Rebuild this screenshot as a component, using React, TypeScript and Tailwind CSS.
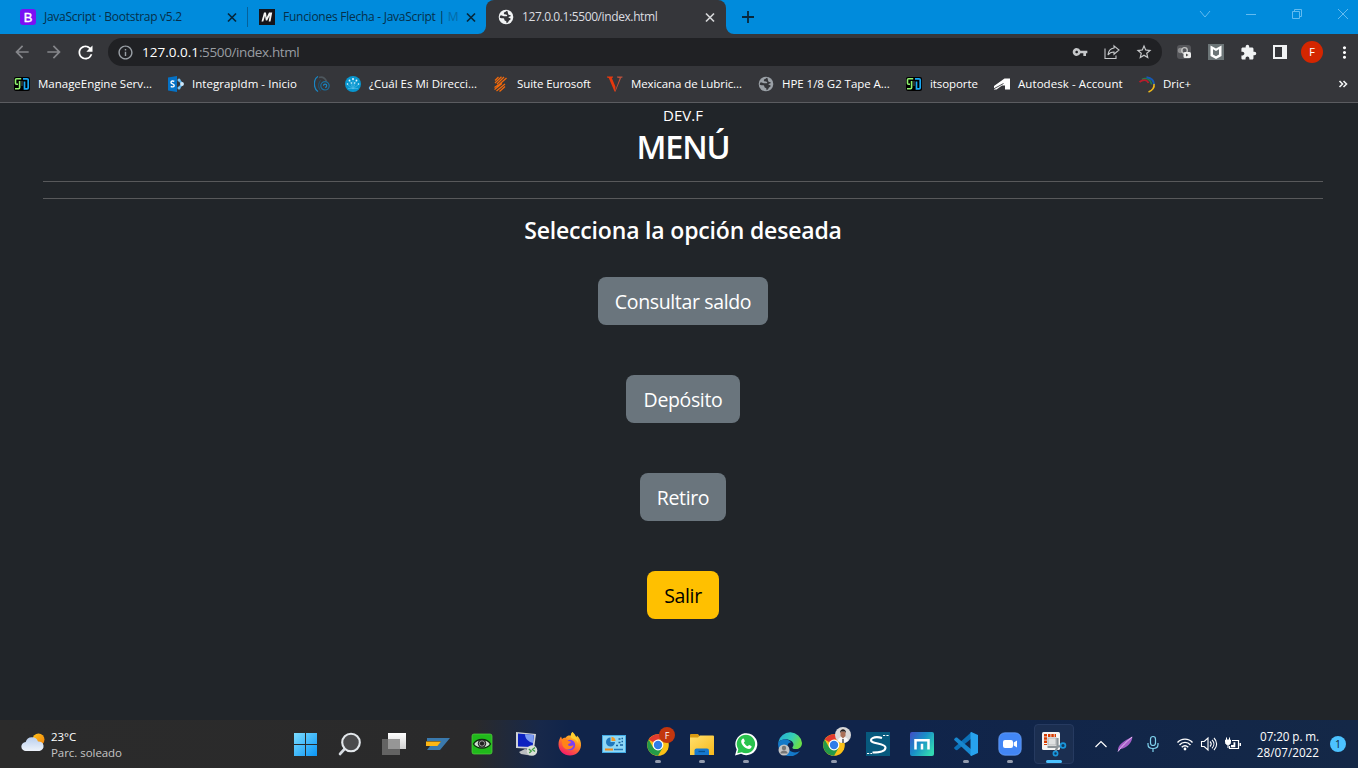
import type { ReactNode } from 'react';
import {
  MdArrowBack,
  MdArrowForward,
  MdRefresh,
  MdInfoOutline,
  MdVpnKey,
  MdStarBorder,
  MdExtension,
  MdMoreVert,
} from 'react-icons/md';

/* ---------- Browser icons ---------- */

function CloseX({ className }: { className: string }) {
  return (
    <svg width="16" height="16" viewBox="0 0 16 16" className={className}>
      <path d="M4 4.500l8 8M12 4.500l-8 8" stroke="currentColor" strokeWidth="1.700" />
    </svg>
  );
}

function BootstrapIcon() {
  return (
    <div className="flex h-4 w-4 shrink-0 items-center justify-center rounded-[3px] bg-[#7a10f4] font-['Liberation_Sans'] text-[13px] leading-none text-white [-webkit-text-stroke:0.4px_white]">
      B
    </div>
  );
}

function MIcon() {
  return (
    <svg width="16" height="16" viewBox="0 0 16 16" className="shrink-0">
      <rect width="16" height="16" fill="#15141a" />
      <path d="M2.500 12.500L5 3.500h2l.6 5L10 3.500h3.200l-1.700 9H9.700l1-6-2.500 5H6.800L6 6.800l-1.700 5.700z" fill="#f4f4f4" />
    </svg>
  );
}

function ManageIcon() {
  return (
    <svg width="16" height="16" viewBox="0 0 16 16" className="shrink-0">
      <rect x="0" y="1" width="16" height="14" rx="2" fill="#000" />
      <path d="M7.200 2.800H2.500q-1 0-1 1v3.400q0 1 1 1H4M5.600 5v6.700q0 1-1 1H1" fill="none" stroke="#8ff26d" strokeWidth="1.600" />
      <path d="M9 2.800h4q1.200 0 1.200 1v8q0 1-1.200 1h-2.500V5.500" fill="none" stroke="#18a8f5" strokeWidth="1.700" />
      <path d="M8 5v5" stroke="#6d7a80" strokeWidth=".8" />
    </svg>
  );
}

function SharePointIcon() {
  return (
    <svg width="16" height="16" viewBox="0 0 16 16" className="shrink-0">
      <path d="M0 1.600L9 0v16l-9-1.600z" fill="#0572c6" />
      <path d="M6.300 5.400C5 4.600 3 4.800 3 6.400c0 1.800 3.200 1.200 3.200 3 0 1.700-2.300 1.800-3.400 1" fill="none" stroke="#fff" strokeWidth="1.400" />
      <path d="M10.500 3.500l4 4.500-4 4.500" fill="none" stroke="#5bb4ee" strokeWidth="2" />
      <circle cx="14" cy="8" r="1.900" fill="#cfe9fb" />
      <circle cx="11" cy="4" r="1.500" fill="#7cc4f2" />
      <circle cx="11" cy="12" r="1.500" fill="#7cc4f2" />
    </svg>
  );
}

function SwirlIcon() {
  return (
    <svg width="16" height="16" viewBox="0 0 16 16" className="shrink-0">
      <path d="M4 .5C-.8 3-.8 12.500 4 15.500" fill="none" stroke="#1a86c4" strokeWidth="1.300" />
      <path d="M6.500 4.500c-2.500 3-2.500 7 0 10" fill="none" stroke="#175a80" strokeWidth="1" />
      <path d="M5 1.500c3.500-1 6 .5 7.500 4" fill="none" stroke="#4d565c" strokeWidth="1.800" />
      <circle cx="11" cy="9.800" r="4.200" fill="none" stroke="#1a6f9f" strokeWidth="1.200" />
      <path d="M9.500 9.800a1.600 1.600 0 1 1 1.600 1.600" fill="none" stroke="#1a86c4" strokeWidth="1.200" />
    </svg>
  );
}

function NetworkIcon() {
  return (
    <svg width="16" height="16" viewBox="0 0 16 16" className="shrink-0">
      <circle cx="8" cy="8" r="8" fill="#0896cf" />
      <g fill="none" stroke="#57bfe8" strokeWidth=".6">
        <path d="M8 13V3M8 13L4.500 4M8 13l3.500-9M8 13L2 8M8 13l6-5M3 12.500h10" />
      </g>
      <g fill="#e8f8ff">
        <circle cx="8" cy="3" r="1" />
        <circle cx="4.500" cy="4.500" r=".9" />
        <circle cx="11.500" cy="4.500" r=".9" />
        <circle cx="2.500" cy="8" r=".8" />
        <circle cx="13.500" cy="8" r=".8" />
        <circle cx="6.500" cy="7" r=".7" />
        <circle cx="9.500" cy="7" r=".7" />
      </g>
    </svg>
  );
}

function EurosoftIcon() {
  return (
    <svg width="16" height="16" viewBox="0 0 16 16" className="shrink-0">
      <g fill="none" stroke="#f0690c" strokeWidth="1.300">
        <path d="M2 4.500L5.500 1M2 7L8.500 .8M4 8L11 1M4.500 10L13.500 2M1.500 11.500L5 9M1.500 13.500L9 7.500M3.500 15L12 8M6.500 15.500l5.500-5" />
      </g>
    </svg>
  );
}

function VIcon() {
  return (
    <svg width="16" height="16" viewBox="0 0 16 16" className="shrink-0">
      <path d="M0 .5h6v1L4.800 2l3.600 8.500V15.500H7.500L1.800 2 0 1.500z" fill="#e8380d" />
      <path d="M10 .5h5.500v1l-1.400.5-5.600 13.500H7.800l4.900-13.200L10 1.500z" fill="#b9503c" />
    </svg>
  );
}

function AutodeskIcon() {
  return (
    <svg width="16" height="16" viewBox="0 0 16 16" className="shrink-0">
      <path d="M0 10L10.500 2.500H16V13.500h-5V9.500H8L2.500 13.500H0z" fill="#fff" />
      <path d="M0 12.700L9.500 7.500" stroke="#35363a" strokeWidth=".9" />
    </svg>
  );
}

function DricIcon() {
  return (
    <svg width="17" height="17" viewBox="0 0 17 17" className="shrink-0">
      <path d="M3 3.500c4-2.500 9 0 9.500 5" fill="none" stroke="#277a4a" strokeWidth="1.500" />
      <path d="M7.500 1.300c5 .7 7.500 3.500 7.500 7.500" fill="none" stroke="#1659b5" strokeWidth="2" />
      <path d="M.5 6C4.500 2.800 8.500 4 9.500 7" fill="none" stroke="#b71c2b" strokeWidth="1.900" />
      <path d="M15 8c.6 3.500-2 6.500-5.500 8" fill="none" stroke="#f0bb1a" strokeWidth="1.600" />
    </svg>
  );
}

function Globe({ disc, land }: { disc: string; land: string }) {
  return (
    <svg width="16" height="16" viewBox="0 0 16 16" className="shrink-0">
      <circle cx="8" cy="8" r="7.300" className={disc} />
      <path
        d="M9.300 1.800c-1.300.2-1.600 1.200-2.800 1.500-1 .3-.7 1.500-.2 1.900.9.600 2.200-.2 2.800.9.400.9-.7 1.200-1.700 1.200H5.800L3 6.200c-.8.300-1.300 1.500-1.200 2.500.9.700 2.600.3 3.700.6 1.200.4.600 1.700 1.200 2.300.7.600 1.500.2 1.700 1.200l.1 1.400c1.700-.5 2-1.800 2.500-2.700.8-.8 1.900-.7 1.600-2-.5-.7-1.500-.4-2.200-1 .1-1 1.100-1.100 1.800-1.100.9-.2.600-1.300-.3-1.400-1-.1-1.500-.3-1.700-1.100-.2-1.100-.6-1.900-.9-3.100z"
        className={land}
      />
    </svg>
  );
}

function Bookmark({
  icon,
  label,
  className,
  textClass = '',
}: {
  icon: ReactNode;
  label?: string;
  className: string;
  textClass?: string;
}) {
  return (
    <div className={`flex shrink-0 items-center ${className}`}>
      <div className="flex w-6 shrink-0 items-center">{icon}</div>
      {label && <span className={`whitespace-pre text-white ${textClass}`}>{label}</span>}
    </div>
  );
}

function TabStrip() {
  return (
    <div className="flex h-[34px] items-center bg-[#008bdc] pl-5 text-[12px] text-[#062f4a]">
      <BootstrapIcon />
      <span className="ml-2 w-[180px] whitespace-pre tracking-[-0.27px]">JavaScript · Bootstrap v5.2</span>
      <CloseX className="text-[#06273b]" />
      <div className="ml-[7px] h-5 w-px bg-[#06619a]" />
      <div className="ml-[11px] flex">
        <MIcon />
      </div>
      <span className="ml-2 w-[176px] tracking-[-0.26px] whitespace-pre">
        Funciones Flecha - JavaScript | <span className="text-[#046aa6]">M</span>
      </span>
      <CloseX className="ml-[4px] text-[#06273b]" />
      <div className="ml-[-1px] flex h-full items-end">
        <svg width="8" height="8" viewBox="0 0 8 8">
          <path d="M8 0v8H0a8 8 0 0 0 8-8z" fill="#35363a" />
        </svg>
      </div>
      <div className="flex h-full w-[240px] items-center rounded-t-lg bg-[#35363a] pl-3 text-[#dcdde0]">
        <Globe disc="fill-[#f1f3f4]" land="fill-[#35363a]" />
        <span className="ml-2 w-[180px] tracking-[-0.4px]">127.0.0.1:5500/index.html</span>
        <CloseX className="text-[#d5d6d8]" />
      </div>
      <div className="flex h-full items-end">
        <svg width="8" height="8" viewBox="0 0 8 8">
          <path d="M0 0v8h8a8 8 0 0 1-8-8z" fill="#35363a" />
        </svg>
      </div>
      <svg width="14" height="14" viewBox="0 0 14 14" className="ml-[7px]">
        <path d="M7 1v12M1 7h12" stroke="#08273b" strokeWidth="1.800" />
      </svg>
      <div className="mr-[9px] ml-auto flex h-7 items-center gap-[34px] pb-[6px] text-[#63bbf0]">
        <svg width="12" height="12" viewBox="0 0 12 12" fill="none" stroke="currentColor">
          <path d="M1 3l5 6 5-6" />
        </svg>
        <svg width="12" height="12" viewBox="0 0 12 12" fill="none" stroke="currentColor">
          <path d="M1 6.500h10" />
        </svg>
        <svg width="12" height="12" viewBox="0 0 12 12" fill="none" stroke="currentColor">
          <path d="M1.500 3.500h7v7h-7zM3.500 3.500v-2h7v7h-2" />
        </svg>
        <svg width="12" height="12" viewBox="0 0 12 12" fill="none" stroke="currentColor">
          <path d="M1 1l10 10M11 1L1 11" />
        </svg>
      </div>
    </div>
  );
}

function Toolbar() {
  return (
    <div className="flex h-9 items-center bg-[#35363a] pl-3">
      <MdArrowBack size={20} className="text-[#85868a]" />
      <MdArrowForward size={20} className="ml-3 text-[#85868a]" />
      <MdRefresh size={21} className="ml-[11px] text-white" />
      <div className="ml-3 flex h-7 w-[1054px] items-center rounded-full bg-[#202124] pl-[9px]">
        <MdInfoOutline size={17} className="text-[#9aa0a6]" />
        <span className="ml-2 text-[13.500px] text-[#999da2]">
          <span className="text-white">127.0.0.1</span>
          <span className="tracking-[-0.38px]">:5500/index.html</span>
        </span>
        <div className="mr-[10px] ml-auto flex items-center gap-4 text-[#c6c8ca]">
          <MdVpnKey size={16} />
          <svg width="16" height="16" viewBox="0 0 16 16" fill="none" stroke="currentColor" strokeWidth="1.100">
            <path d="M1 4.500v10h11v-3" />
            <path d="M10 1.800l5 4.200-5 4.200V8c-3 0-4.700 1-6 3 .3-4 2.500-6.500 6-7z" />
          </svg>
          <MdStarBorder size={18} className="-mx-px" />
        </div>
      </div>
      <svg width="16" height="16" viewBox="0 0 16 16" className="ml-[14px]">
        <rect x="1" y="1" width="14" height="14" rx="3" fill="#55565a" />
        <circle cx="4.500" cy="6.500" r="2.700" fill="#8d8d8f" />
        <circle cx="8.500" cy="6.500" r="2.800" fill="none" stroke="#c4c4c4" strokeWidth="1.300" />
        <rect x="7.500" y="8" width="7.500" height="6" rx="1.500" fill="#eeeeee" />
        <path d="M10 9.500v3l2.500-1.500z" fill="#4a4a4a" />
      </svg>
      <svg width="16" height="16" viewBox="0 0 16 16" className="ml-4">
        <rect width="16" height="16" fill="#6c7577" />
        <path d="M2.500 1.500L8 4.500l5.500-3V12L8 15 2.500 12zM5 5.300v5.300L8 12.300l3-1.700V5.300L8 7z" fill="#fff" fillRule="evenodd" />
      </svg>
      <MdExtension size={17} className="ml-4 text-[#f1f3f4]" />
      <svg width="14" height="14" viewBox="0 0 14 14" className="ml-4">
        <path d="M1 1h12v12H1z" fill="none" stroke="#f1f3f4" strokeWidth="2" />
        <path d="M9 0h5v14H9z" fill="#f1f3f4" />
      </svg>
      <div className="ml-[14px] flex h-[22px] w-[22px] items-center justify-center rounded-full bg-[#d42600] text-[11.500px] text-white">
        F
      </div>
      <MdMoreVert size={19} className="ml-3 text-white" />
    </div>
  );
}

function Bookmarks() {
  return (
    <div className="flex h-[33px] items-center overflow-hidden border-b border-[#5b5c60] bg-[#35363a] pb-[4px] pl-[14px] text-[11.500px]">
      <Bookmark className="w-[154px]" icon={<ManageIcon />} label="ManageEngine Serv..." textClass="tracking-[-0.01px]" />
      <Bookmark className="w-[146px]" icon={<SharePointIcon />} label="Integrapldm - Inicio" textClass="tracking-[0.05px]" />
      <Bookmark className="w-[31px]" icon={<SwirlIcon />} />
      <Bookmark className="w-[148px]" icon={<NetworkIcon />} label="¿Cuál Es Mi Direcci..." />
      <Bookmark className="w-[114px]" icon={<EurosoftIcon />} label="Suite Eurosoft" textClass="tracking-[-0.1px]" />
      <Bookmark className="w-[151px]" icon={<VIcon />} label="Mexicana de Lubric..." textClass="tracking-[-0.09px]" />
      <Bookmark
        className="w-[148px]"
        icon={<Globe disc="fill-[#9aa0a6]" land="fill-[#35363a]" />}
        label="HPE 1/8 G2 Tape A..."
        textClass="tracking-[-0.04px]"
      />
      <Bookmark className="w-[88px]" icon={<ManageIcon />} label="itsoporte" textClass="tracking-[-0.09px]" />
      <Bookmark className="w-[145px]" icon={<AutodeskIcon />} label="Autodesk - Account" textClass="tracking-[0.07px]" />
      <Bookmark className="w-[100px]" icon={<DricIcon />} label="Dric+" />
      <svg width="10" height="10" viewBox="0 0 10 10" className="mr-[10px] ml-auto shrink-0">
        <path d="M1.500 2l3 3-3 3M5.500 2l3 3-3 3" fill="none" stroke="#f1f3f4" strokeWidth="1.600" />
      </svg>
    </div>
  );
}

/* ---------- Page ---------- */

function Page() {
  return (
    <main className="flex h-[617px] flex-col items-center bg-[#212529] pr-[35px] pl-[43px] text-white">
      <div className="text-[15px] leading-6 tracking-[0.02px]">DEV.F</div>
      <h1 className="mb-[15px] pt-px text-[32.500px] leading-[38px] font-semibold tracking-[-1.2px]">MENÚ</h1>
      <hr className="mb-4 w-full border-[#58595b]" />
      <hr className="mb-4 w-full border-[#58595b]" />
      <h2 className="mb-8 pt-px text-[23px] leading-[29px] font-semibold tracking-[-0.17px]">
        Selecciona la opción deseada
      </h2>
      <div className="flex flex-col items-center gap-[50px] text-[19.500px] tracking-[-0.36px]">
        <button className="h-12 w-[170px] rounded-lg bg-[#6a757d] pt-[2px]">Consultar saldo</button>
        <button className="h-12 w-[114px] rounded-lg bg-[#6a757d] pt-[2px]">Depósito</button>
        <button className="h-12 w-[86px] rounded-lg bg-[#6a757d] pt-[2px]">Retiro</button>
        <button className="h-12 w-[72px] rounded-lg bg-[#ffc000] pt-[2px] text-black">Salir</button>
      </div>
    </main>
  );
}

/* ---------- Taskbar ---------- */

function WeatherIcon() {
  return (
    <svg width="24" height="20" viewBox="0 0 24 20">
      <defs>
        <linearGradient id="cloud" x1="0" y1="0" x2="0" y2="1">
          <stop offset="0" stopColor="#b9cfee" />
          <stop offset="1" stopColor="#eef3fa" />
        </linearGradient>
        <linearGradient id="sun" x1="0" y1="0" x2="1" y2="1">
          <stop offset="0" stopColor="#ffc31a" />
          <stop offset="1" stopColor="#f07f09" />
        </linearGradient>
      </defs>
      <circle cx="17.500" cy="6.500" r="6" fill="url(#sun)" />
      <path d="M5 18a4.500 4.500 0 0 1-.3-9A6.500 6.500 0 0 1 17 8.500 4.800 4.800 0 0 1 18.500 18z" fill="url(#cloud)" />
    </svg>
  );
}

function WindowsIcon() {
  return (
    <svg width="24" height="24" viewBox="0 0 24 24">
      <defs>
        <linearGradient id="win" x1="0" y1="0" x2="1" y2="1">
          <stop offset="0" stopColor="#7bdcff" />
          <stop offset="1" stopColor="#0a95f5" />
        </linearGradient>
      </defs>
      <path d="M0 1h11v11H0zM12 1h11v11H12zM0 13h11v11H0zM12 13h11v11H12z" fill="url(#win)" />
    </svg>
  );
}

function SearchIcon() {
  return (
    <svg width="24" height="24" viewBox="0 0 24 24">
      <path d="M2 22L7.500 16" stroke="#d5dae0" strokeWidth="2.600" strokeLinecap="round" />
      <circle cx="13" cy="10.500" r="8.800" fill="#4a4a4c" stroke="#e3e7eb" strokeWidth="2.100" />
    </svg>
  );
}

function TaskViewIcon() {
  return (
    <svg width="24" height="24" viewBox="0 0 24 24">
      <defs>
        <linearGradient id="tv" x1="0" y1="0" x2="0" y2="1">
          <stop offset="0" stopColor="#fff" />
          <stop offset="1" stopColor="#d0d0d0" />
        </linearGradient>
      </defs>
      <path d="M6 1h18v16H6z" fill="url(#tv)" />
      <path d="M0 7h18v16H0z" fill="#6b6b6b" opacity=".88" />
      <path d="M6 7h12v10H6z" fill="#a0a0a0" opacity=".75" />
    </svg>
  );
}

function WingIcon() {
  return (
    <svg width="24" height="24" viewBox="0 0 24 24">
      <path d="M1 6h23L14 18H1l3-4h7l4-5H1z" fill="#3a79ad" />
      <path d="M0 9.500h15l-3.500 4.500H0z" fill="#fdb714" />
    </svg>
  );
}

function EyeIcon() {
  return (
    <svg width="24" height="24" viewBox="0 0 24 24">
      <rect x="2" y="2" width="20" height="20" rx="2" fill="#20b91b" stroke="#58d343" strokeWidth=".7" />
      <path d="M3.500 12C7 6 17 6 20.500 12 17 17.500 7 17.500 3.500 12z" fill="#cfdccf" stroke="#0b2b0b" strokeWidth="1.300" />
      <circle cx="12" cy="11.500" r="4.200" fill="#222" />
      <circle cx="12" cy="11.500" r="2.700" fill="none" stroke="#bbb" strokeWidth=".8" />
    </svg>
  );
}

function RemoteIcon() {
  return (
    <svg width="24" height="24" viewBox="0 0 24 24">
      <path d="M2 0l20 2-2 15-18-1z" fill="#d0d3d6" />
      <path d="M4 1.500l16 1.500-1.500 12L4 14.500z" fill="#0c22c0" />
      <path d="M11 2.200l8.800 .8L19 11c-4-1-8-4-8-8.800z" fill="#7b9cf2" />
      <path d="M5 20l6-3 8 2-3 4.500-9-1.500z" fill="#babdc0" />
      <circle cx="18" cy="18.500" r="5.300" fill="#dadfd8" />
      <path d="M14.800 17l2.500 2-2 2M21 15.500l-2.500 2 2.500 2" fill="none" stroke="#3d9d43" strokeWidth="1.300" />
    </svg>
  );
}

function FirefoxIcon() {
  return (
    <svg width="24" height="24" viewBox="0 0 24 24">
      <defs>
        <linearGradient id="ff" x1=".8" y1="0" x2=".3" y2="1">
          <stop offset="0" stopColor="#ffe335" />
          <stop offset=".45" stopColor="#ff8a20" />
          <stop offset="1" stopColor="#f5156c" />
        </linearGradient>
      </defs>
      <path d="M14.500 0c2 1.500 3 3.300 3.500 5 .7-.2 1-.8 1-1.500 3 3 4.300 6.500 4 10C22.500 19.500 18 23.500 12 23.500S.5 19 .5 12.500C.5 9 1.700 6.500 3 4.500l1 2.500c1.200-1.200 2.500-1.500 3.500-1.300 1.400-2 3.500-2.400 5.500-2C13 2.500 13.500 1 14.500 0z" fill="url(#ff)" />
      <circle cx="12" cy="13" r="5.200" fill="#7b3ff2" />
      <path d="M3.500 7.500C7 6.500 9 7.500 10.500 9c1 .2 2.500.3 2.500 1.200-1 1.300-2 1-3 2.300.5 2 3.500 2 5.500.5-.5 5-8.500 6.500-11 .5z" fill="#ff8418" />
      <path d="M14.500 0c1 4 6 5 5.800 11.500-1-3-3.500-4.500-6-5C12 4.500 12.500 2 14.500 0z" fill="#ffcf30" />
    </svg>
  );
}

function ControlPanelIcon() {
  return (
    <svg width="24" height="24" viewBox="0 0 24 24">
      <rect x=".5" y="3.500" width="23" height="17" fill="#8ed7f6" stroke="#43abe4" />
      <path d="M8.500 5.500V10h4.500A4.500 4.500 0 1 1 8.500 5.500z" fill="#2078bd" />
      <path d="M9.500 4.800a4.500 4.500 0 0 1 4 4.200h-4z" fill="#ef9b27" />
      <path d="M3 17.500h8" stroke="#f08a1a" strokeWidth="2" />
      <path d="M12 17.500h9" stroke="#267ab9" strokeWidth="1.500" />
      <path d="M14 13.500h2M16.500 10.500h2M16.500 7h2M19.500 6.500h1.500M19.500 9.500h1.500M18 13h3" fill="none" stroke="#1762a0" strokeWidth="1.600" />
    </svg>
  );
}

function ChromeIcon() {
  return (
    <svg width="24" height="24" viewBox="0 0 24 24">
      <circle cx="12" cy="13" r="10.800" fill="#fbc116" />
      <path d="M12 13L2.650 7.600A10.800 10.800 0 0 1 21.350 7.600H12z" fill="#e33b2e" />
      <path d="M2.650 7.600A10.800 10.800 0 0 0 12 23.800l4.700-8.100L12 13 7.300 15.700z" fill="#249a48" />
      <circle cx="12" cy="13" r="5.400" fill="#fff" />
      <circle cx="12" cy="13" r="4.200" fill="#2f7de9" />
    </svg>
  );
}

function FolderIcon() {
  return (
    <svg width="24" height="24" viewBox="0 0 24 24">
      <defs>
        <linearGradient id="fold" x1="0" y1="0" x2="1" y2="1">
          <stop offset="0" stopColor="#ffe06e" />
          <stop offset="1" stopColor="#f9b91b" />
        </linearGradient>
      </defs>
      <path d="M0 3q0-1 1-1h7l2 2.500V8H0z" fill="#d99a12" />
      <path d="M0 5.500h8l2-2h13q1 0 1 1V23H0z" fill="url(#fold)" />
      <path d="M4.500 23v-4.500q0-2 2-2h10.500q2 0 2 2V23z" fill="#1678ce" />
      <path d="M8.500 19.500h6.500" stroke="#07508e" strokeWidth="1.300" />
    </svg>
  );
}

function WhatsAppIcon() {
  return (
    <svg width="24" height="24" viewBox="0 0 24 24">
      <path d="M1 23.500l1.700-6A11 11 0 1 1 7 21.800z" fill="#fff" />
      <path d="M3.300 21.200l1-4a9.200 9.200 0 1 1 3.400 3z" fill="#29c24d" />
      <path d="M8.600 6.800c.7-.5 1.300-.2 1.600.7l.6 1.600c.1.600-.9 1.200-.9 1.600.8 1.600 2 2.800 3.700 3.500.5 0 1-1 1.500-1.200l2.300 1.100c.6.4 0 2.600-2.300 2.900-3.600 0-8-4.300-7.900-7.500 0-1.200.6-2.100 1.400-2.700z" fill="#fff" />
    </svg>
  );
}

function EdgeIcon() {
  return (
    <svg width="24" height="24" viewBox="0 0 24 24">
      <defs>
        <linearGradient id="edge" x1="0" y1="0" x2="1" y2=".4">
          <stop offset="0" stopColor="#23a9dc" />
          <stop offset=".6" stopColor="#35cfb6" />
          <stop offset="1" stopColor="#69df4b" />
        </linearGradient>
      </defs>
      <path d="M.3 10A12 12 0 0 1 24 11c0 4-3 6.500-7 6-2 0-3.500-1-2-2.500C18 9 7 4 .3 10z" fill="url(#edge)" />
      <path d="M.3 10C5 5.500 11.500 7 13 10.500 9 10.500 8.500 15 11 18c3 3 8 3 11 1A12 12 0 0 1 .3 10z" fill="#1479c9" />
      <circle cx="6" cy="18" r="5.500" fill="#c4c4c4" />
      <circle cx="6" cy="16" r="2.200" fill="#777" />
      <path d="M2.300 21.500c.3-4 7.100-4 7.400 0" fill="#777" />
    </svg>
  );
}

function RoadIcon() {
  return (
    <svg width="24" height="24" viewBox="0 0 24 24">
      <rect width="24" height="24" fill="#07597d" />
      <path d="M16 6C8 3.500 2 7.500 6.500 10c3.500 1.800 13 2 13 5.500 0 4-6 5-13 5" fill="none" stroke="#fff" strokeWidth="2.100" />
      <path d="M17 3.500h6M1 21.500h5" stroke="#fff" strokeWidth="1.200" strokeDasharray="2.200 1.200" />
    </svg>
  );
}

function MaxthonIcon() {
  return (
    <svg width="24" height="24" viewBox="0 0 24 24">
      <defs>
        <linearGradient id="mx" x1="0" y1="0" x2="1" y2=".7">
          <stop offset="0" stopColor="#424cc5" />
          <stop offset=".5" stopColor="#198fc7" />
          <stop offset="1" stopColor="#32d9b3" />
        </linearGradient>
      </defs>
      <rect width="24" height="24" rx="2" fill="url(#mx)" />
      <path d="M5.500 17.500V8.300h13v9.200M12 17.500v-5.800" fill="none" stroke="#fff" strokeWidth="2.500" />
    </svg>
  );
}

function CodeIcon() {
  return (
    <svg width="24" height="24" viewBox="0 0 24 24">
      <path d="M17.500 0v6.500L3 18.300l-1.200-.2L.2 16.500v-1z" fill="#0b70b8" />
      <path d="M.2 8v-1l1.600-1.400L3 5.500l14.500 12V24z" fill="#1887cf" />
      <path d="M17.300 0L24 3v18l-6.700 3q-1 0-.8-1.300V1.300Q16.300 0 17.300 0z" fill="#27a2ee" />
    </svg>
  );
}

function ZoomIcon() {
  return (
    <svg width="24" height="24" viewBox="0 0 24 24">
      <rect x=".8" y=".8" width="22.400" height="22.400" rx="6" fill="#4286f5" stroke="#6ea5fa" strokeWidth=".7" />
      <rect x="5" y="8" width="10" height="8" rx="2" fill="#fff" />
      <path d="M15.700 10.500L19 8.500v7l-3.300-2z" fill="#fff" />
    </svg>
  );
}

function SnipIcon() {
  return (
    <svg width="26" height="26" viewBox="0 0 26 26">
      <rect x="1" y="1" width="18" height="18" rx="1.500" fill="#f4f4f4" />
      <path d="M4.500 3v11M7 4.500h8" fill="none" stroke="#d83b01" strokeWidth="3" strokeDasharray="2.500 .8" />
      <path d="M7 14V7h8v7z" fill="#dfe1e2" stroke="#b5b8ba" strokeWidth="1.200" />
      <path d="M16.500 7v9l-2 4M6.500 16h9l5-1" fill="none" stroke="#8d9499" strokeWidth="2.200" />
      <circle cx="22" cy="14.500" r="2.400" fill="#12375c" stroke="#1996db" strokeWidth="1.700" />
      <circle cx="14.500" cy="22.500" r="2.100" fill="#12375c" stroke="#1996db" strokeWidth="1.700" />
    </svg>
  );
}

function AvatarPhoto() {
  return (
    <svg width="16" height="16" viewBox="0 0 16 16">
      <circle cx="8" cy="8" r="8" fill="#d9d9d9" />
      <path d="M3 14c0-3 2-4 5-4s5 1 5 4a8 8 0 0 1-10 0z" fill="#f8f8f8" />
      <path d="M5.500 4.500h5V9L8 11.500 5.500 9z" fill="#a97058" />
      <path d="M5 6c-.3-5 6.300-5 6 0L10 4.500H6z" fill="#24201f" />
      <path d="M8 12v4" stroke="#343843" strokeWidth="1.300" />
    </svg>
  );
}

function TaskButton({
  children,
  open = false,
  active = false,
  badge,
}: {
  children: ReactNode;
  open?: boolean;
  active?: boolean;
  badge?: ReactNode;
}) {
  return (
    <div className="flex h-12 w-11 shrink-0 items-center justify-center">
      <div
        className={
          active
            ? 'relative flex h-10 w-10 items-center justify-center rounded border border-[#263a60] bg-[#1b2e50]'
            : 'relative flex h-10 w-10 items-center justify-center'
        }
      >
        {children}
        {badge && <div className="absolute top-[3px] right-[3px]">{badge}</div>}
        {open && <div className="absolute bottom-px left-[17px] h-[3px] w-[6px] rounded-full bg-[#939cae]" />}
        {active && <div className="absolute bottom-0 left-[11px] h-[3px] w-4 rounded-full bg-[#4cc2ff]" />}
      </div>
    </div>
  );
}

function Taskbar() {
  return (
    <footer className="flex h-12 items-center bg-[linear-gradient(90deg,#2b2b2b_0px,#2a2a2b_475px,#17284a_540px,#10244a_570px,#10244a_900px,#142847_1358px)] text-white">
      <div className="flex w-[284px] shrink-0 items-center pl-[21px]">
        <div className="pb-[3px]">
          <WeatherIcon />
        </div>
        <div className="ml-[6px] pt-[2px] text-[11.500px] leading-4">
          <div className="tracking-[-0.05px]">23°C</div>
          <div className="tracking-[-0.05px] text-[#c5c5c5]">Parc. soleado</div>
        </div>
      </div>
      <TaskButton><WindowsIcon /></TaskButton>
      <TaskButton><SearchIcon /></TaskButton>
      <TaskButton><TaskViewIcon /></TaskButton>
      <TaskButton><WingIcon /></TaskButton>
      <TaskButton><EyeIcon /></TaskButton>
      <TaskButton><RemoteIcon /></TaskButton>
      <TaskButton><FirefoxIcon /></TaskButton>
      <TaskButton><ControlPanelIcon /></TaskButton>
      <TaskButton
        open
        badge={
          <div className="flex h-4 w-4 items-center justify-center rounded-full bg-[#c2360e] text-[9px] leading-none">F</div>
        }
      >
        <ChromeIcon />
      </TaskButton>
      <TaskButton open><FolderIcon /></TaskButton>
      <TaskButton open><WhatsAppIcon /></TaskButton>
      <TaskButton><EdgeIcon /></TaskButton>
      <TaskButton open badge={<AvatarPhoto />}><ChromeIcon /></TaskButton>
      <TaskButton><RoadIcon /></TaskButton>
      <TaskButton><MaxthonIcon /></TaskButton>
      <TaskButton open><CodeIcon /></TaskButton>
      <TaskButton open><ZoomIcon /></TaskButton>
      <TaskButton active><SnipIcon /></TaskButton>

      <svg width="14" height="14" viewBox="0 0 14 14" className="ml-[18px] shrink-0">
        <path d="M1.500 10L7 4.500l5.500 5.500" fill="none" stroke="#fff" strokeWidth="1.200" />
      </svg>
      <svg width="16" height="16" viewBox="0 0 16 16" className="ml-[9px] shrink-0">
        <path d="M1 15.500C0 9 7 5 15.500.5 15 7 10 12 3.500 13z" fill="#a55fc9" />
        <path d="M1 15.500C5 10 9 6 15 1" fill="none" stroke="#e3bff2" strokeWidth="1" />
      </svg>
      <svg width="14" height="18" viewBox="0 0 14 18" className="ml-[13px] shrink-0" fill="none" stroke="#7fd3ee" strokeWidth="1.200">
        <rect x="4.500" y="1.500" width="5" height="9" rx="2.500" />
        <path d="M2 8v1.500c0 5.300 10 5.300 10 0V8M7 13.500V17" />
      </svg>
      <svg width="18" height="16" viewBox="0 0 18 16" className="ml-4 shrink-0" fill="none" stroke="#fff" strokeWidth="1.400">
        <path d="M1.500 6.500c4-4.500 11-4.500 15 0M3.500 9c3-3.500 8-3.500 11 0M5.700 11.300c2-2 4.600-2 6.600 0" />
        <circle cx="9" cy="13" r="1.400" fill="#fff" stroke="none" />
      </svg>
      <svg width="18" height="16" viewBox="0 0 18 16" className="ml-[6px] shrink-0" fill="none" stroke="#fff" strokeWidth="1.100">
        <path d="M1.500 5.500h2.700L8 2v12l-3.800-3.500H1.500zM10 5.500c1.500 1.500 1.500 3.500 0 5M12 3.800c2.500 2.500 2.500 6 0 8.500M14 2c3.500 3.500 3.500 8.500 0 12" />
      </svg>
      <svg width="18" height="16" viewBox="0 0 18 16" className="ml-[6px] shrink-0">
        <path d="M8 4.500h6.500v8h-9V10" fill="none" stroke="#fff" strokeWidth="1.200" />
        <path d="M9.500 6.300h1.800v4.900H7V9h2.500zM15.500 7H17v3h-1.500z" fill="#fff" />
        <path d="M1.500 4h5v2.500c0 3-5 3-5 0zM2.500 1.500V4M5.500 1.500V4M4 8v4" fill="#fff" stroke="#fff" strokeWidth="1" />
      </svg>
      <div className="ml-auto shrink-0 text-right text-[11.700px] leading-4">
        <div className="tracking-[-0.1px] whitespace-pre">07:20 p. m.</div>
        <div className="tracking-[0.02px]">28/07/2022</div>
      </div>
      <div className="mr-[12px] ml-[11px] flex h-4 w-4 shrink-0 items-center justify-center rounded-full bg-[#4cc2ff] text-[10.500px] leading-none text-[#0e2434]">
        1
      </div>
    </footer>
  );
}

export default function App() {
  return (
    <div className="flex h-[768px] w-[1358px] flex-col overflow-hidden font-['Open_Sans','Noto_Sans',sans-serif]">
      <TabStrip />
      <Toolbar />
      <Bookmarks />
      <Page />
      <Taskbar />
    </div>
  );
}
